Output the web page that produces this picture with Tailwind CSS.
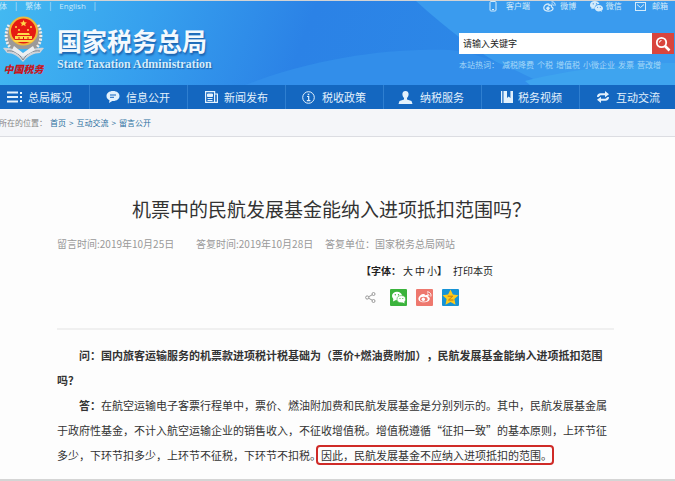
<!DOCTYPE html>
<html lang="zh-CN">
<head>
  <meta charset="UTF-8" />
  <meta name="viewport" content="width=device-width, initial-scale=1" />
  <title>国家税务总局 - 留言公开</title>
  <script src="https://cdn.jsdelivr.net/npm/@tailwindcss/browser@4"></script>
</head>
<body class="bg-[#fdfdfd] font-['Noto_Sans_CJK_SC',sans-serif] text-[11px] text-[#333] overflow-hidden">
  <div class="min-h-screen flex flex-col border-t border-[#d3d3d3]">

    <!-- Cabecera -->
    <header class="relative h-[84px] overflow-hidden bg-[linear-gradient(110deg,#43b9f1_0%,#36a0ee_22%,#2b82e6_45%,#2e8ee8_100%)] text-white">
      <svg class="absolute inset-0 w-full h-full" viewBox="0 0 675 84" preserveAspectRatio="none">
        <path d="M416 0 C460 40 500 68 545 84 H675 V0z" fill="#3a9bee" />
        <path d="M245 84 C330 52 400 48 450 49 C480 52 510 66 545 84z" fill="#328eea" />
        <path d="M525 80 C570 68 630 62 675 62 V84 H530z" fill="#3ea4ef" />
      </svg>

      <div class="relative flex justify-between h-full">
        <div>
          <div class="flex h-[10px] items-center gap-2 text-[8px] leading-[10px] text-[#c5e8fb] -ml-px">
            <a href="#">体</a><span>|</span><a href="#">繁体</a><span>|</span><a href="#" class="font-['Open_Sans',sans-serif]">English</a><span>|</span>
          </div>
          <div class="flex gap-3 pl-[2px] pt-[5px]">
            <div class="w-[43px] flex flex-col items-center">
              <svg class="w-[43px] h-[46px]" viewBox="0 0 43 46">
                <path d="M8 8 C2 15 2 27 9 33 L34 33 C41 27 41 15 35 8z" fill="#9c9a98" />
                <path d="M7 9 C3 15 3 26 8 31 M36 9 C40 15 40 26 35 31" fill="none" stroke="#eee" stroke-width="3" stroke-dasharray="2 1.5" />
                <path d="M1 32 C8 31 15 34 21 41 C27 34 34 31 42 32 L38 37 C32 37 26 40 21 46 C16 40 11 37 5 37z" fill="#cfd3d8" />
                <path d="M5 35 C11 34 17 37 21 44 C25 37 31 34 38 35" fill="none" stroke="#7d848d" />
                <path d="M12 30 L21 37 L31 30 L33 34 L21 41 L10 34z" fill="#eceef0" />
                <circle cx="21.500" cy="15" r="13.500" fill="#e61b12" stroke="#efb83b" stroke-width="2" />
                <path d="M21.500 4 l1 2.200 2.400 .2 -1.800 1.600 .6 2.300 -2.200 -1.200 -2.200 1.200 .6 -2.300 -1.800 -1.600 2.400 -.2z" fill="#ffd94a" />
                <g fill="#ffd94a"><circle cx="14" cy="11" r="1" /><circle cx="29" cy="11" r="1" /><circle cx="17" cy="14" r="1" /><circle cx="26" cy="14" r="1" />
                <path d="M16 17h11l1 2H15zM13 20h17v3H13zM11 24h21l-2 2H13z" /></g>
                <path d="M17 21v2M21.500 21v2M26 21v2" stroke="#c8200f" />
              </svg>
              <span class="italic font-black text-[10px] leading-[14px] text-[#c8161d]">中国税务</span>
            </div>
            <div class="pt-[7px]">
              <h1 class="font-bold text-[25px] leading-[34px] text-[#f3f9fe] text-shadow-[1px_2px_2px_#1b61ad]">国家税务总局</h1>
              <p class="font-['Liberation_Serif',serif] font-bold text-[12px] leading-[14px] text-[#d4ecfb] text-shadow-[1px_1px_1px_#1b61ad]">State Taxation Administration</p>
            </div>
          </div>
        </div>

        <div class="w-[216px] shrink-0 text-[8px] text-[#d3ebfb]">
          <div class="flex h-[10px] items-center justify-between leading-[10px] pl-[30px] pr-[7px]">
            <a href="#" class="flex items-center gap-[9px]">
              <svg class="w-2 h-[11px]" viewBox="0 0 8 11"><rect x="1" y="0.500" width="6" height="9.500" rx="1" fill="none" stroke="currentColor" /><path d="M3 8.500h2" stroke="currentColor" /></svg>客户端</a>
            <a href="#" class="flex items-center gap-1">
              <svg class="w-[13px] h-[11px]" viewBox="0 0 13 11" fill="none" stroke="currentColor"><path d="M5 3 C2 3 .8 5.500 .8 7 C1 11 10 11 10 7.500 C10 6.500 9 6 8.500 5.800 C9 4 7.500 3.800 6 4.500 C6 4 6.500 3 5 3z" stroke-width="1.300" /><circle cx="5" cy="7.300" r="1.300" fill="currentColor" /><path d="M8.500 2.800c1.300-.2 2 .8 1.700 2M8.500 .8c2.500-.3 4.200 1.700 3.500 4" /></svg>微博</a>
            <a href="#" class="flex items-center gap-[3px]">
              <svg class="w-[13px] h-[11px]" viewBox="0 0 24 20"><path d="M9 0C4 0 0 3.200 0 7c0 2.300 1.200 4.200 3.200 5.500L2.400 15l3-1.500c1 .3 2 .5 3.400.5C8 9 12 5.500 17.500 5.500 16.500 2 13 0 9 0z" fill="currentColor" /><path d="M16.500 7C12 7 9 9.800 9 13s3 6 7.500 6c1 0 2-.2 2.800-.5L22 20l-.7-2.400C23 16.500 24 15 24 13c0-3.200-3.300-6-7.500-6z" fill="currentColor" /><g fill="#2c84dc"><circle cx="6" cy="5" r="1.200" /><circle cx="12" cy="5" r="1.200" /><circle cx="14" cy="11.500" r="1" /><circle cx="19" cy="11.500" r="1" /></g></svg>微信</a>
            <a href="#" class="flex items-center gap-[6px]">
              <svg class="w-[11px] h-[9px]" viewBox="0 0 11 9" fill="none" stroke="currentColor"><rect x="0.500" y="0.500" width="10" height="8" /><path d="M2 2.500l3.500 3 3.500-3" /></svg>邮箱</a>
          </div>
          <form class="mt-[22px] flex h-[21px] mr-px">
            <input type="text" aria-label="搜索" value="请输入关键字" class="min-w-0 flex-1 bg-white px-1 text-[9px] text-[#222] outline-none" />
            <button type="button" aria-label="搜索" class="w-[22px] bg-[#d9453d] flex items-center justify-center">
              <svg class="w-4 h-4" viewBox="0 0 16 16" fill="none" stroke="#fff"><circle cx="6.500" cy="6.500" r="4.700" stroke-width="1.800" /><path d="M10 10l4.500 4.500" stroke-width="2.600" /><path d="M4.500 6.500a2 2 0 0 1 2-2" /></svg>
            </button>
          </form>
          <p class="mt-[5px] flex gap-[3px] leading-[12px] text-[#a3d7f8] whitespace-nowrap">
            <span>本站热词：</span><a href="#">减税降费</a><a href="#">个税</a><a href="#">增值税</a><a href="#">小微企业</a><a href="#">发票</a><a href="#">营改增</a>
          </p>
        </div>
      </div>
    </header>

    <!-- Menú principal -->
    <nav class="h-[24px] bg-[#1467c0] overflow-hidden">
      <div class="-ml-2 -mr-[3px] h-full grid grid-cols-7 text-[#e3f1fc] leading-[24px] divide-x divide-[#2f7fd0]">
        <a href="#" class="flex items-center gap-1 pl-[15px] whitespace-nowrap">
          <svg class="w-[17px] h-3 shrink-0" viewBox="0 0 17 12" stroke="currentColor" stroke-width="2"><path d="M0 1.500h11M0 6h11M0 10.500h11" /><path d="M14 1v2M14 5v2M14 9v2" /></svg>总局概况</a>
        <a href="#" class="flex items-center gap-[6px] pl-[16px] whitespace-nowrap">
          <svg class="w-[14px] h-3 shrink-0" viewBox="0 0 14 12"><path d="M7 0C3 0 .5 2.200 .5 5c0 2 1.200 3.500 3 4.300L3 12l3.300-2H7c4 0 6.500-2.200 6.500-5S11 0 7 0z" fill="currentColor" /><path d="M4 4h6M4 6.300h4" stroke="#1467c0" /></svg>信息公开</a>
        <a href="#" class="flex items-center gap-[6px] pl-[17px] whitespace-nowrap">
          <svg class="w-[13px] h-3 shrink-0" viewBox="0 0 13 12" fill="none" stroke="currentColor"><path d="M.6 .6h9v10.800h-9zM9.600 3h2.800v8.400H9" stroke-width="1.200" /><path d="M2.500 3h5v2.500h-5z" fill="currentColor" /><path d="M2.500 7.500h5M2.500 9.500h5" /></svg>新闻发布</a>
        <a href="#" class="flex items-center gap-[7px] pl-[16px] whitespace-nowrap">
          <svg class="w-[13px] h-[13px] shrink-0" viewBox="0 0 13 13" fill="none" stroke="currentColor"><circle cx="6.500" cy="6.500" r="5.800" /><path d="M6.500 2.700v1.500" stroke-width="1.600" /><path d="M5 5.500h1.700v4M4.800 9.600h3.600" stroke-width="1.200" /></svg>税收政策</a>
        <a href="#" class="flex items-center gap-[7px] pl-[14px] whitespace-nowrap">
          <svg class="w-[15px] h-[13px] shrink-0" viewBox="0 0 15 13" fill="currentColor"><path d="M7.500 0C5.300 0 4.200 1.600 4.400 3.500 4.500 5 5.200 6.300 6 7v1.500L1.500 10 .5 13h14l-1-3L9 8.500V7c.8-.7 1.500-2 1.600-3.500C10.800 1.600 9.700 0 7.500 0z" /></svg>纳税服务</a>
        <a href="#" class="flex items-center gap-[5px] pl-[19px] whitespace-nowrap">
          <svg class="w-3 h-3 shrink-0" viewBox="0 0 12 12" fill="currentColor"><path d="M0 0h1.300v12H0zM2.500 0H6v7l1.700-1.600L9.400 7V0H12v12H2.500z" /></svg>税务视频</a>
        <a href="#" class="flex items-center gap-[7px] pl-[17px] whitespace-nowrap">
          <svg class="w-3 h-3 shrink-0" viewBox="0 0 12 12" fill="currentColor"><path d="M8 0l4 3.300-4 3V4.300H3.500L1.500 6H0C0 3.500 1.500 2.300 3.500 2.300H8zM4 12L0 8.700l4-3v2h4.500l2-1.700H12c0 2.500-1.500 3.700-3.500 3.700H4z" /></svg>互动交流</a>
      </div>
    </nav>

    <!-- Ruta -->
    <div class="h-[28px] bg-[#f5f6f9] border-b border-[#dcdde2] flex items-center gap-[3px] text-[8px] text-[#2b70a0] whitespace-nowrap -ml-px">
      <span class="text-[#888]">所在的位置：</span><a href="#">首页</a><span>&gt;</span><a href="#">互动交流</a><span>&gt;</span><a href="#">留言公开</a>
    </div>

    <!-- Contenido -->
    <main class="grow pl-[57px] pr-[61px] border-b-2 border-[#d5d5d5]">
      <h2 class="mt-[58px] pl-[75px] text-[19px] leading-[28px] whitespace-nowrap">机票中的民航发展基金能纳入进项抵扣范围吗？</h2>
      <div class="mt-[13px] flex text-[10px] leading-[16px] text-[#999] whitespace-nowrap">
        <span class="w-[139px]">留言时间:2019年10月25日</span>
        <span class="w-[129px]">答复时间:2019年10月28日</span>
        <span>答复单位：国家税务总局网站</span>
      </div>

      <div class="pl-[304px] pt-3 flex items-center text-[10px] leading-[14px] text-[#222] whitespace-nowrap [text-spacing-trim:space-all]">
        <span class="font-bold">【字体：</span>
        <div class="flex gap-[2px] pl-[2px]"><button type="button">大</button><button type="button">中</button><button type="button">小</button></div>
        <span class="font-bold">】</span>
        <a href="#" class="pl-[6px]">打印本页</a>
      </div>
      <div class="pl-[308px] pt-[11px] flex items-center">
        <svg class="w-[11px] h-[11px] mr-[14px]" viewBox="0 0 11 11" fill="none" stroke="#999"><circle cx="2.200" cy="5.500" r="1.600" /><circle cx="8.500" cy="2" r="1.500" /><circle cx="8.500" cy="9" r="1.500" /><path d="M3.600 4.800L7.200 2.800M3.600 6.200l3.600 2" /></svg>
        <a href="#" aria-label="微信" class="mr-[9px]">
          <svg class="w-[17px] h-[17px]" viewBox="0 0 17 17"><rect width="17" height="17" rx="1" fill="#3bb33c" /><ellipse cx="7" cy="7" rx="5" ry="4.200" fill="#fff" /><path d="M3.500 9L3 12.500 6.500 10.800z" fill="#fff" /><ellipse cx="11.300" cy="10.200" rx="4.300" ry="3.600" fill="#fff" stroke="#3bb33c" stroke-width=".6" /><path d="M12 13l2.500 1.500-.4-2.500z" fill="#fff" /><g fill="#3bb33c"><circle cx="5.300" cy="5.800" r=".7" /><circle cx="8.500" cy="5.800" r=".7" /><circle cx="10" cy="9.500" r=".6" /><circle cx="12.800" cy="9.500" r=".6" /></g></svg>
        </a>
        <a href="#" aria-label="微博" class="mr-[9px]">
          <svg class="w-[17px] h-[17px]" viewBox="0 0 17 17"><rect width="17" height="17" rx="1" fill="#ee786e" /><path d="M7 5C4 5.500 2.300 8.500 2.400 10c.3 4.500 11.200 4.500 11.400-.2 0-1.200-.8-1.700-1.600-2 .5-1.700-1-2.200-3.300-1.300C9.200 5.500 8.500 4.800 7 5z" fill="#fff" /><ellipse cx="7.800" cy="10.200" rx="3.800" ry="2.400" fill="#ee786e" /><circle cx="7.300" cy="10.300" r="1.700" fill="#fff" /><path d="M11 5c1.300-.2 2.200.8 1.800 2.200M11 3c2.700-.4 4.600 1.800 3.800 4.500" fill="none" stroke="#fff" /></svg>
        </a>
        <a href="#" aria-label="QQ空间">
          <svg class="w-[17px] h-[17px]" viewBox="0 0 17 17"><rect width="17" height="17" rx="1" fill="#1593d6" /><path d="M8.500 .5l2.400 5 5.600.7-4.100 3.900 1.100 5.600-5-2.800-5 2.800 1.100-5.600L.5 6.200l5.600-.7z" fill="#fdc91c" /><path d="M5.700 7.200h5L6.500 11h5" fill="none" stroke="#c07b10" /></svg>
        </a>
      </div>

      <div class="mt-[22px] border-t-2 border-[#f0f0f0] pt-[13px] leading-[25px] whitespace-nowrap [text-spacing-trim:space-all]">
        <p class="indent-[22px] font-bold">问：国内旅客运输服务的机票款进项税计税基础为（票价+燃油费附加），民航发展基金能纳入进项抵扣范围<br />吗？</p>
        <p class="indent-[22px]"><b>答：</b>在航空运输电子客票行程单中，票价、燃油附加费和民航发展基金是分别列示的。其中，民航发展基金属<br />于政府性基金，不计入航空运输企业的销售收入，不征收增值税。增值税遵循“征扣一致”的基本原则，上环节征<br />多少，下环节扣多少，上环节不征税，下环节不扣税。<mark class="bg-transparent text-inherit rounded-[2px] outline-2 outline-[#cf2a27] pl-[3px] -ml-[3px]">因此，民航发展基金不应纳入进项抵扣的范围。</mark></p>
      </div>
    </main>
  </div>
</body>
</html>
